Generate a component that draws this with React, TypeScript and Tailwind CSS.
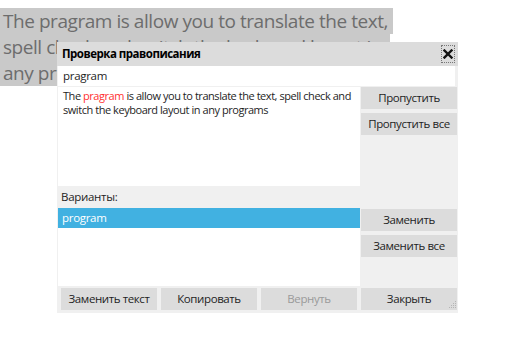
import React from "react";

const FONT = { fontFamily: '"Open Sans", "Noto Sans", sans-serif' };

function Btn({ label, disabled }: { label: string; disabled?: boolean }) {
  return (
    <button
      className={`w-[96px] h-[22px] bg-[#dcdcdc] text-[11.5px] leading-none tracking-[-0.4px] ${disabled ? "text-[#9a9a9a]" : "text-[#1e1e1e]"}`}
    >
      {label}
    </button>
  );
}

export default function App() {
  return (
    <div className="relative w-[528px] h-[359px] bg-white overflow-hidden" style={FONT}>
      {/* selected text in the host window */}
      <div className="pt-[8px] text-[19px] leading-[26px] tracking-[-0.45px] text-[#6d6d6d]">
        <div className="w-[393px] h-[26px] bg-[#c9c9c9] pl-[3px] whitespace-nowrap">The pragram is allow you to translate the text,</div>
        <div className="w-[390px] h-[26px] bg-[#c9c9c9] pl-[3px] whitespace-nowrap overflow-hidden">spell check and switch the keyboard layout in</div>
        <div className="w-[160px] h-[26px] bg-[#c9c9c9] pl-[3px] whitespace-nowrap">any programs</div>
      </div>

      {/* spell check dialog */}
      <div className="absolute left-[57px] top-[42px] w-[401px] h-[271px] bg-[#f0f0f0] flex flex-col text-[#1e1e1e]">
        <div className="h-[24px] bg-[#dcdcdc] flex items-center justify-between pl-[5px] pr-[3px]">
          <span className="text-[11.5px] font-bold text-black tracking-[-0.5px]">Проверка правописания</span>
          <span className="w-[14px] h-[18px] border border-dotted border-[#777] flex items-center justify-center">
            <svg width="10" height="10" viewBox="0 0 10 10">
              <path d="M1.5 1.5 L8.5 8.5 M8.5 1.5 L1.5 8.5" stroke="#111" strokeWidth="2.4" strokeLinecap="square" />
            </svg>
          </span>
        </div>

        <div className="mx-[1px] mr-[3px] h-[20px] bg-white flex items-center pl-[5px] text-[11.5px] tracking-[-0.3px]">pragram</div>

        <div className="flex ml-[1px] mr-[1px] mt-[1px]">
          <div className="w-[302px] h-[99px] bg-white px-[5px] pt-[2px] text-[11px] leading-[14px] tracking-[-0.45px]">
            The <span className="text-[#ff3030]">pragram</span> is allow you to translate the text, spell check and switch the keyboard layout in any programs
          </div>
          <div className="flex flex-col gap-[4px] pl-[1px]">
            <Btn label="Пропустить" />
            <Btn label="Пропустить все" />
          </div>
        </div>

        <div className="h-[22px] flex items-center pl-[4px] text-[11.5px] tracking-[-0.3px]">Варианты:</div>

        <div className="flex ml-[1px] mr-[1px]">
          <div className="w-[302px] h-[78px] bg-white">
            <div className="h-[20px] bg-[#41b1e1] text-white flex items-center pl-[4px] text-[11.5px] tracking-[-0.3px]">program</div>
          </div>
          <div className="flex flex-col gap-[4px] pl-[1px] pt-[1px]">
            <Btn label="Заменить" />
            <Btn label="Заменить все" />
          </div>
        </div>

        <div className="relative flex gap-[4px] pl-[4px] pt-[2px]">
          <Btn label="Заменить текст" />
          <Btn label="Копировать" />
          <Btn label="Вернуть" disabled />
          <Btn label="Закрыть" />
          <svg className="absolute right-[1px] bottom-[1px]" width="8" height="8" viewBox="0 0 8 8">
            <g fill="#b5b5b5">
              <rect x="6" y="0" width="1" height="1" />
              <rect x="4" y="2" width="1" height="1" />
              <rect x="6" y="2" width="1" height="1" />
              <rect x="2" y="4" width="1" height="1" />
              <rect x="4" y="4" width="1" height="1" />
              <rect x="6" y="4" width="1" height="1" />
              <rect x="0" y="6" width="1" height="1" />
              <rect x="2" y="6" width="1" height="1" />
              <rect x="4" y="6" width="1" height="1" />
              <rect x="6" y="6" width="1" height="1" />
            </g>
          </svg>
        </div>
      </div>
    </div>
  );
}
